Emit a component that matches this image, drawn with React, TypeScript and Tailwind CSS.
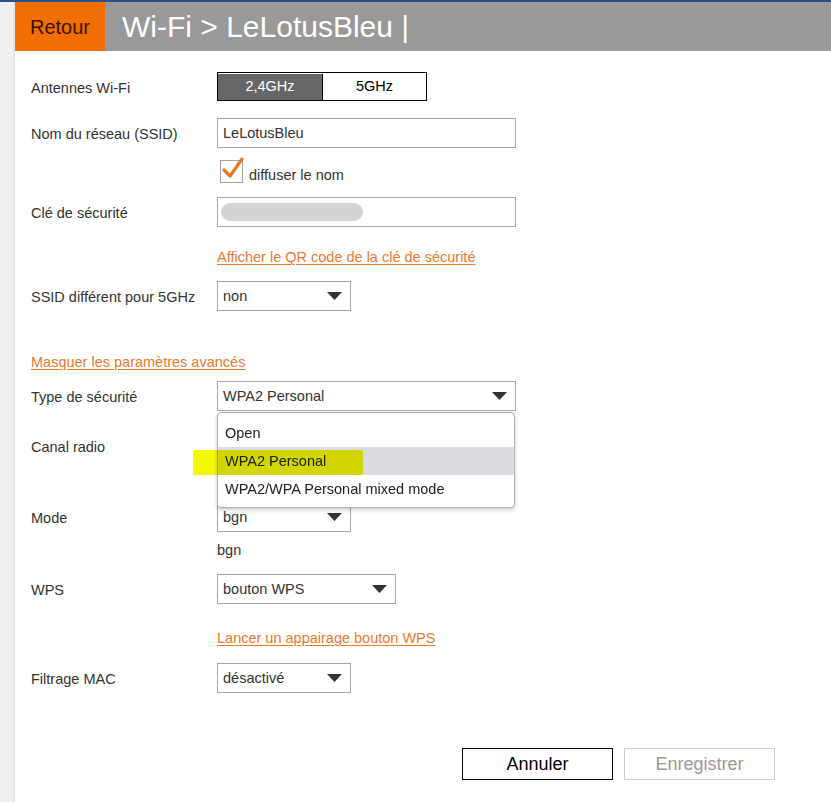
import type { ReactNode } from "react";

const font = { fontFamily: '"Liberation Sans", Arial, sans-serif' };

function Caret() {
  return (
    <svg width="15" height="8" viewBox="0 0 15 8" className="shrink-0">
      <polygon points="0,0 15,0 7.5,8" fill="#333333" />
    </svg>
  );
}

function FakeSelect({ value, width }: { value: string; width: string }) {
  return (
    <div
      className={`flex h-[30px] items-center justify-between border border-[#a8a8a8] bg-white pl-[5px] pr-[8px] text-[14.5px] text-[#333] ${width}`}
    >
      <span className="pt-[2px]">{value}</span>
      <Caret />
    </div>
  );
}

function Row({ label, children, className = "" }: { label?: string; children?: ReactNode; className?: string }) {
  return (
    <div className={`flex items-center ${className}`}>
      <div className="flex h-[30px] w-[186px] shrink-0 items-center pt-[4px] text-[14.5px] text-[#333]">{label}</div>
      <div className="flex-1">{children}</div>
    </div>
  );
}

function OrangeLink({ children }: { children: ReactNode }) {
  return (
    <a href="#" className="block h-[16px] text-[14.5px] leading-[16px] text-[#e87a30] underline underline-offset-2">
      {children}
    </a>
  );
}

function Check() {
  return (
    <div className="relative h-[23px] w-[23px] border border-[#a0a0a0] bg-white">
      <svg width="26" height="26" viewBox="0 0 26 26" className="absolute -left-[1px] -top-[5px]">
        <path d="M4 14 L10 20 L22 3" fill="none" stroke="#e8782a" strokeWidth="3.2" strokeLinecap="round" strokeLinejoin="round" />
      </svg>
    </div>
  );
}

export default function App() {
  return (
    <div className="min-h-[802px] w-[831px] bg-white" style={font}>
      <div className="h-[2px] bg-[#2f4d8c]" />
      <div className="flex min-h-[800px]">
        <div className="w-[15px] shrink-0 border-r-2 border-[#e6e6e6] bg-[#efefef]" />
        <div className="flex-1">
          <header className="flex h-[49px]">
            <button className="flex w-[90px] items-center justify-center bg-[#f16e00] text-[20px] text-[#3d1200]">
              Retour
            </button>
            <div className="flex flex-1 items-center bg-[#999999] pl-[17px] text-[30px] text-white">
              Wi-Fi &gt; LeLotusBleu |
            </div>
          </header>

          <div className="pl-[16px]">
            <Row label="Antennes Wi-Fi" className="mt-[21px] h-[29px]">
              <div className="flex h-[29px] w-[210px] border border-black pt-[1px] text-[14.5px]">
                <div className="flex w-[104px] items-center justify-center bg-[#666666] text-white">2,4GHz</div>
                <div className="flex flex-1 items-center justify-center border-l border-black bg-white text-black">
                  5GHz
                </div>
              </div>
            </Row>

            <Row label="Nom du réseau (SSID)" className="mt-[17px]">
              <div className="flex h-[30px] w-[299px] items-center border border-[#a8a8a8] pl-[5px] pt-[2px] text-[14.5px] text-[#333]">
                LeLotusBleu
              </div>
            </Row>

            <Row className="mt-[12px] h-[23px]">
              <div className="flex items-center gap-[6px] pl-[3px]">
                <Check />
                <span className="pt-[8px] text-[14.5px] text-[#333]">diffuser le nom</span>
              </div>
            </Row>

            <Row label="Clé de sécurité" className="mt-[14px]">
              <div className="flex h-[30px] w-[299px] items-center border border-[#a8a8a8] pl-[3px]">
                <div className="h-[18px] w-[142px] rounded-full bg-[#d3d3d3]" />
              </div>
            </Row>

            <div className="mt-[22px] pl-[186px]">
              <OrangeLink>Afficher le QR code de la clé de sécurité</OrangeLink>
            </div>

            <Row label="SSID différent pour 5GHz" className="mt-[16px]">
              <FakeSelect value="non" width="w-[134px]" />
            </Row>

            <div className="mt-[43px]">
              <OrangeLink>Masquer les paramètres avancés</OrangeLink>
            </div>

            <Row label="Type de sécurité" className="mt-[11px]">
              <div className="relative w-[299px]">
                <FakeSelect value="WPA2 Personal" width="w-[299px]" />
                <div className="absolute left-0 top-[31px] z-10 w-[298px] rounded-[4px] border border-[#b0b0b0] bg-white pb-[4px] pt-[6px] text-[14.5px] text-[#222] shadow-[0_2px_4px_rgba(0,0,0,0.2)]">
                  <div className="flex h-[28px] items-center pl-[7px] pt-[1px]">Open</div>
                  <div className="flex h-[28px] items-center bg-[#dcdce0] pl-[7px] pt-[1px]">WPA2 Personal</div>
                  <div className="flex h-[28px] items-center pl-[7px] pt-[1px]">WPA2/WPA Personal mixed mode</div>
                  <div className="pointer-events-none absolute -left-[25px] top-[37px] h-[25px] w-[170px] rounded-[2px] bg-[#f4f800] mix-blend-multiply" />
                </div>
              </div>
            </Row>

            <Row label="Canal radio" className="mt-[20px]" />

            <Row label="Mode" className="mt-[41px]">
              <FakeSelect value="bgn" width="w-[134px]" />
            </Row>

            <div className="mt-[9px] h-[16px] pl-[186px] pt-[1px] text-[14.5px] leading-[16px] text-[#333]">bgn</div>

            <Row label="WPS" className="mt-[17px]">
              <FakeSelect value="bouton WPS" width="w-[179px]" />
            </Row>

            <div className="mt-[26px] pl-[186px]">
              <OrangeLink>Lancer un appairage bouton WPS</OrangeLink>
            </div>

            <Row label="Filtrage MAC" className="mt-[17px]">
              <FakeSelect value="désactivé" width="w-[134px]" />
            </Row>

            <div className="mt-[55px] flex justify-end gap-[11px] pr-[56px]">
              <button className="h-[32px] w-[151px] border border-black bg-white pt-[1px] text-[18px] text-black">Annuler</button>
              <button className="h-[32px] w-[151px] border border-[#cccccc] bg-white pt-[1px] text-[18px] text-[#999999]">
                Enregistrer
              </button>
            </div>
          </div>
        </div>
      </div>
    </div>
  );
}
